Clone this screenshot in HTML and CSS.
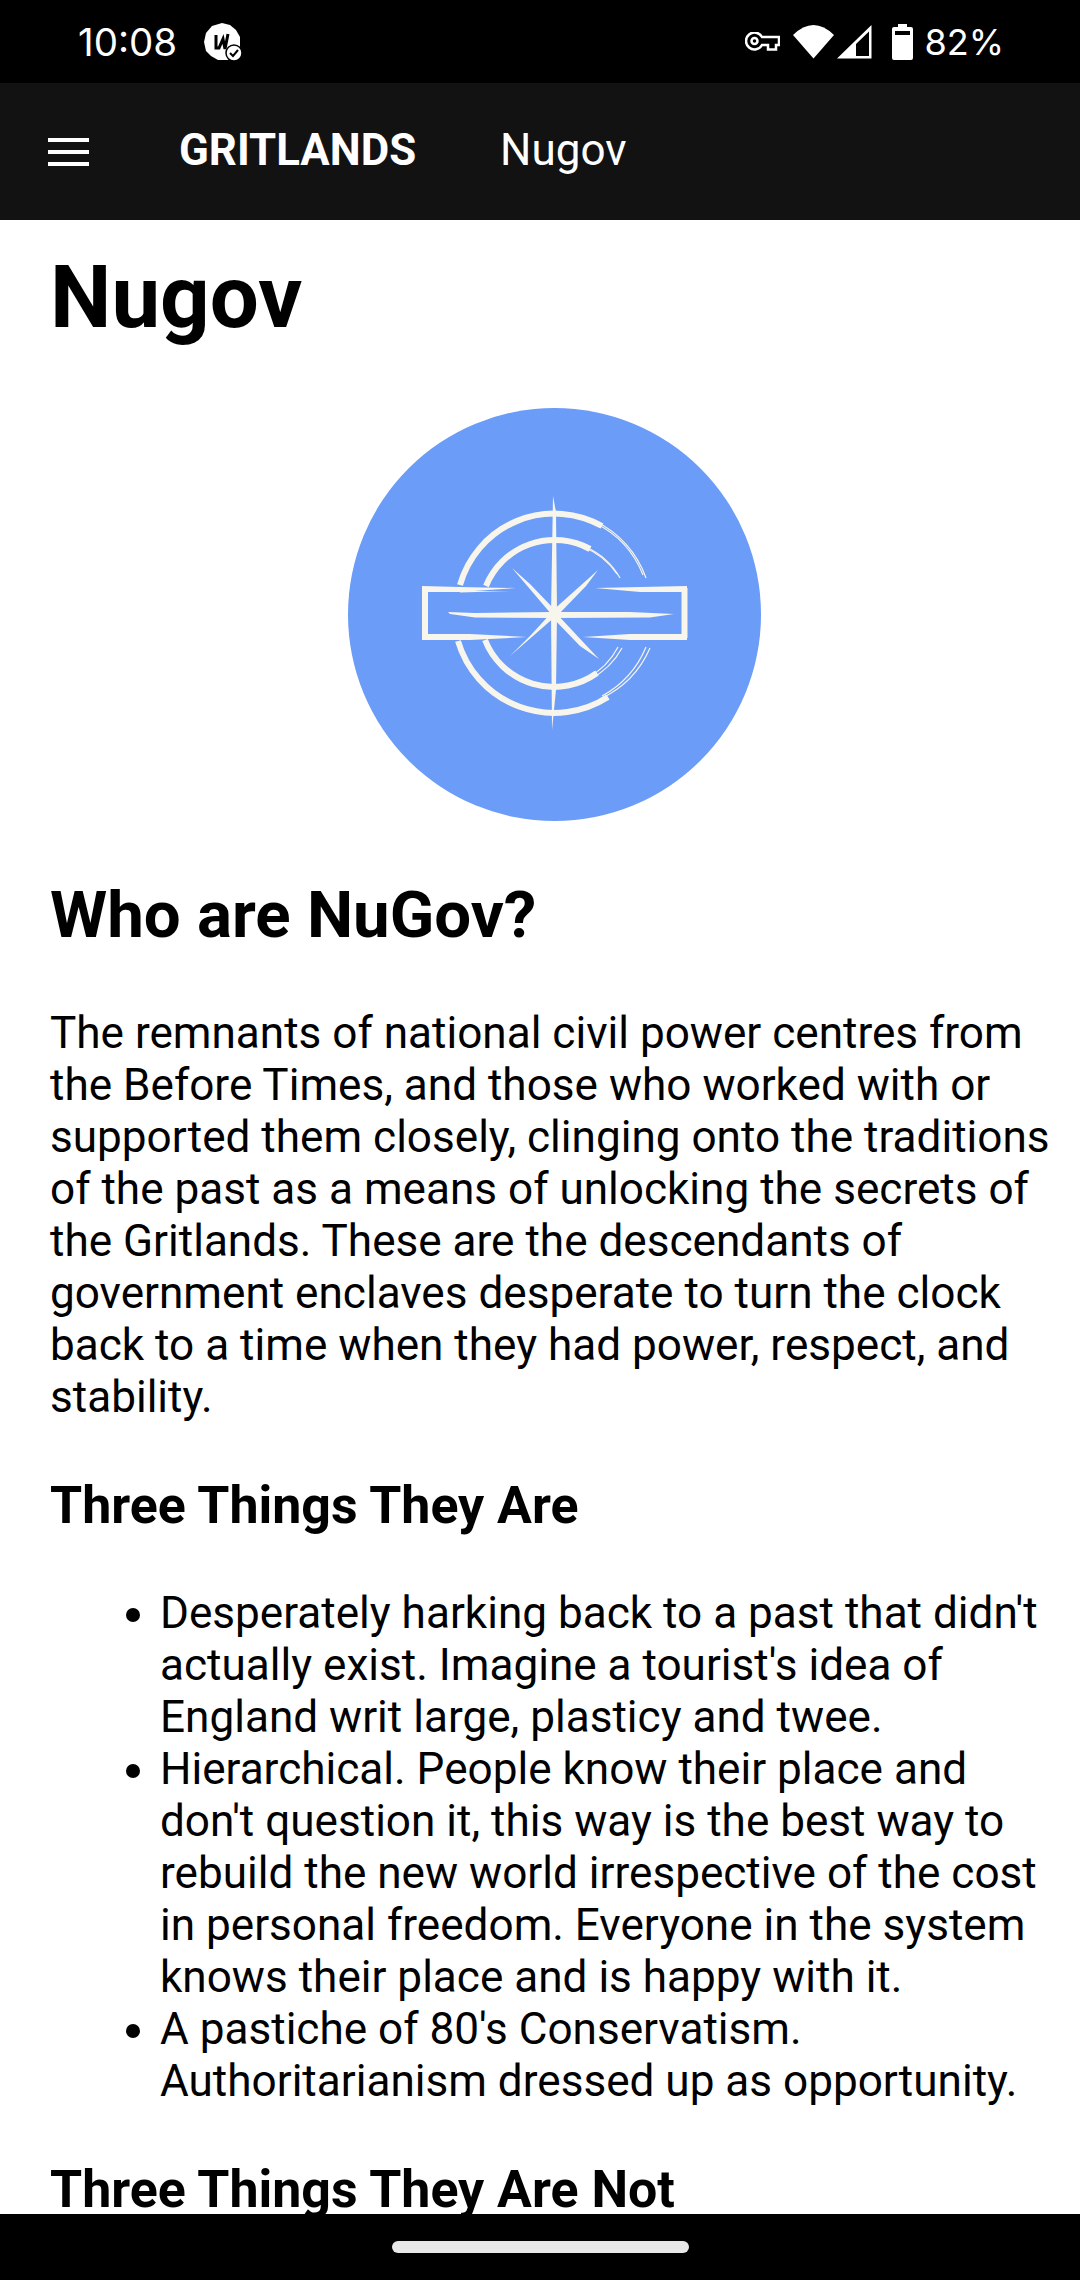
FILE: index.html
```html
<!DOCTYPE html>
<html lang="en">
<head>
    <meta charset="UTF-8">
    <meta name="viewport" content="width=device-width, initial-scale=1.0">
    <title>Nugov</title>
    <link rel="stylesheet" href="styles.css">
</head>
<body>
  <div class="status-bar">
    <div class="status-left">
      <span class="clock">10:08</span>
      <svg class="app-icon" width="38" height="38" viewBox="0 0 38 38">
        <polygon fill="#fff" points="18,0 26,2 32,7 36,14 36,24 32,32 24,37 14,37 7,33 2,28 0,19 2,10 8,3"/>
        <path d="M12 12 V25 L15 25 L19 16 L21 26 L24 11" fill="none" stroke="#000" stroke-width="3"/>
        <circle cx="30" cy="30" r="8" fill="#fff" stroke="#000" stroke-width="1.500"/>
        <path d="M26 30 L29 33 L34 27" fill="none" stroke="#000" stroke-width="2"/>
      </svg>
    </div>
    <div class="status-right">
      <svg class="key-icon" width="35" height="20" viewBox="0 0 35 20">
        <path d="M17 5 H34 V13 H31 V17.500 H23 V13 H17 A8.500 8.500 0 1 1 17 5 Z" fill="none" stroke="#fff" stroke-width="2.500"/>
        <circle cx="9.500" cy="9" r="3" fill="none" stroke="#fff" stroke-width="2.500"/>
      </svg>
      <svg class="wifi-icon" width="41" height="34" viewBox="0 0 41 34">
        <path d="M0 10 Q20.500 -10 41 10 L20.500 33.500 Z" fill="#fff"/>
      </svg>
      <svg class="signal-icon" width="35" height="34" viewBox="0 0 35 34">
        <path d="M0 33.500 L34.500 0 V33.500 Z M19 31 H32 V6.500 L19 19 Z" fill="#fff" fill-rule="evenodd"/>
      </svg>
      <svg class="battery-icon" width="21" height="36" viewBox="0 0 21 36">
        <path d="M6 0 H15 V3 H19 Q21 3 21 5 V34 Q21 36 19 36 H2 Q0 36 0 34 V5 Q0 3 2 3 H6 Z M3 7 V11 H18 V7 Z" fill="#fff" fill-rule="evenodd"/>
      </svg>
      <span class="battery-text">82%</span>
    </div>
  </div>

  <div class="app-bar">
    <div class="menu-icon">
      <span></span>
      <span></span>
      <span></span>
    </div>
    <span class="site-title">GRITLANDS</span>
    <span class="page-title">Nugov</span>
  </div>

  <div class="content">
    <h1>Nugov</h1>
    <div class="logo-wrap">
      <svg class="logo" width="413" height="413" viewBox="8 8 413 413">
        <circle cx="214.500" cy="214.500" r="206.500" fill="#6b9cf7"/>
        <g fill="none" stroke="#f7f5ec" stroke-width="6">
          <!-- rings, heavy part -->
          <path d="M120 185 A98 98 0 0 1 262 126"/>
          <path d="M118 241 A100 100 0 0 0 268 297"/>
          <path d="M146 186 A74 74 0 0 1 250 149"/>
          <path d="M145 240 A74 74 0 0 0 257 273"/>
          <!-- rect sides -->
          <path d="M85 188 V238 M344.500 188 V238"/>
        </g>
        <g fill="none" stroke="#f7f5ec" stroke-width="1.200">
          <!-- rings, dry brush ends -->
          <path d="M255 121 A100 100 0 0 1 306 178"/>
          <path d="M255 123 A98.500 98.500 0 0 1 303 175"/>
          <path d="M260 299 A100 100 0 0 0 310 248"/>
          <path d="M262 296 A98 98 0 0 0 306 247"/>
          <path d="M246 147 A74 74 0 0 1 280 178"/>
          <path d="M243 147 A72 72 0 0 1 277 174"/>
          <path d="M250 279 A74 74 0 0 0 282 248"/>
          <path d="M247 278 A72 72 0 0 0 278 247"/>
          <path d="M122 185 L126 167"/>
          <path d="M119 243 L124 260"/>
        </g>
        <g fill="#f7f5ec">
          <!-- rectangle edges, tapered like brush strokes -->
          <polygon points="82,186 120,187 176,188 120,192 82,192"/>
          <polygon points="120,191 172,191 120,192.500"/>
          <polygon points="347,186 300,187 255,188 300,192 347,192"/>
          <polygon points="82,234 130,234 187,237 130,240 82,240"/>
          <polygon points="347,234 290,234 243,237 290,240 347,240"/>
          <!-- centre cross -->
          <polygon points="108,212 135,213 213,212 213,218 135,217.500 110,214"/>
          <polygon points="213,212 290,212 334,214 310,217.500 213,218"/>
          <polygon points="213,96 216,112 217,213 211,213"/>
          <polygon points="211,213 217,213 216,290 212,330"/>
          <polygon points="172,168 190,184 216,211 212,215"/>
          <polygon points="258,170 246,186 216,217 211,212"/>
          <polygon points="170,256 190,236 212,212 216,216"/>
          <polygon points="259,259 240,246 211,216 215,212"/>
          <circle cx="213.500" cy="214.500" r="5"/>
        </g>
      </svg>
    </div>

    <h2>Who are NuGov?</h2>
    <p>The remnants of national civil power centres from the Before Times, and those who worked with or supported them closely, clinging onto the traditions of the past as a means of unlocking the secrets of the Gritlands. These are the descendants of government enclaves desperate to turn the clock back to a time when they had power, respect, and stability.</p>

    <h3>Three Things They Are</h3>
    <ul>
      <li>Desperately harking back to a past that didn't actually exist. Imagine a tourist's idea of England writ large, plasticy and twee.</li>
      <li>Hierarchical. People know their place and don't question it, this way is the best way to rebuild the new world irrespective of the cost in personal freedom. Everyone in the system knows their place and is happy with it.</li>
      <li>A pastiche of 80's Conservatism. Authoritarianism dressed up as opportunity.</li>
    </ul>

    <h3>Three Things They Are Not</h3>
  </div>

  <div class="nav-bar">
    <div class="home-pill"></div>
  </div>
</body>
</html>
```

FILE: styles.css
```css
html, body {
    margin: 0;
    padding: 0;
}

body {
    width: 1080px;
    height: 2280px;
    display: flex;
    flex-direction: column;
    overflow: hidden;
    font-family: Roboto, Arial, sans-serif;
    background-color: #fff;
    color: #000;
}

.status-bar {
    height: 83px;
    flex: none;
    box-sizing: border-box;
    padding: 0 76px 0 78px;
    display: flex;
    justify-content: space-between;
    align-items: center;
    background-color: #000;
    color: #fff;
}

.status-left,
.status-right {
    display: flex;
    align-items: center;
}

.clock,
.battery-text {
    font-family: Inter, Roboto, sans-serif;
    line-height: 40px;
}

.clock {
    font-size: 38.500px;
}

.battery-text {
    font-size: 36px;
    margin-left: 11px;
}

.app-icon {
    margin-left: 27px;
}

.wifi-icon {
    margin-left: 13px;
}

.signal-icon {
    margin-left: 3px;
}

.battery-icon {
    margin-left: 20px;
}

.app-bar {
    height: 137px;
    flex: none;
    box-sizing: border-box;
    padding-left: 48px;
    display: flex;
    align-items: center;
    background-color: #121212;
    color: #fff;
}

.menu-icon {
    width: 41px;
    display: flex;
    flex-direction: column;
    gap: 8px;
}

.menu-icon span {
    height: 4px;
    background-color: #fff;
}

.site-title {
    margin-left: 90px;
    padding-bottom: 4px;
    font-size: 43.800px;
    font-weight: 700;
}

.page-title {
    margin-left: 84px;
    padding-bottom: 4px;
    font-size: 44px;
}

.content {
    flex: 1;
    min-height: 0;
    overflow: hidden;
    padding: 0 21px 0 50px;
    font-size: 44.100px;
    line-height: 52px;
}

h1 {
    margin: 26px 0 0;
    font-size: 87px;
    line-height: 103px;
    font-weight: 700;
}

.logo-wrap {
    margin-top: 59px;
    display: flex;
    justify-content: center;
}

h2 {
    margin: 55px 0 0;
    font-size: 65.400px;
    line-height: 77px;
    font-weight: 700;
}

p {
    margin: 54px 0 0;
}

h3 {
    margin: 53px 0 0;
    font-size: 51.900px;
    line-height: 60px;
    font-weight: 700;
}

ul {
    margin: 51px 0 0;
    padding-left: 110px;
}

.nav-bar {
    height: 66px;
    flex: none;
    display: flex;
    justify-content: center;
    background-color: #000;
}

.home-pill {
    width: 297px;
    height: 12px;
    margin-top: 27px;
    border-radius: 6px;
    background-color: #e8e8e8;
}
```
